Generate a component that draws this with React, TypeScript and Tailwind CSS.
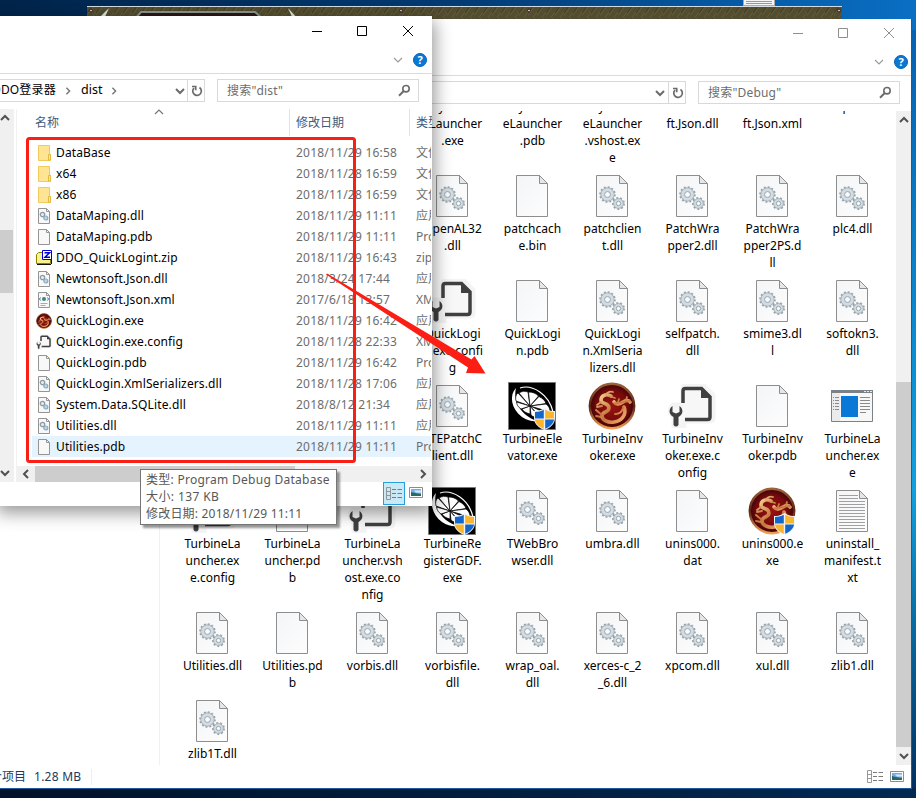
import type { ReactNode } from 'react';

type Kind = 'dll' | 'blank' | 'config' | 'citrus' | 'dragon' | 'dragonShield' | 'app' | 'text' | 'none';
type Entry = { icon: Kind; lines: string[] };

const e = (icon: Kind, ...lines: string[]): Entry => ({ icon, lines });

const gap = e('none');

const rows: Entry[][] = [
  [gap, gap, gap, e('dll', 'OpenAL32', '.dll'), e('blank', 'patchcach', 'e.bin'), e('dll', 'patchclien', 't.dll'), e('dll', 'PatchWra', 'pper2.dll'), e('dll', 'PatchWra', 'pper2PS.d', 'll'), e('dll', 'plc4.dll')],
  [gap, gap, gap, e('config', 'QuickLogi', 'n.exe.confi', 'g'), e('blank', 'QuickLogi', 'n.pdb'), e('dll', 'QuickLogi', 'n.XmlSeria', 'lizers.dll'), e('dll', 'selfpatch.', 'dll'), e('dll', 'smime3.dl', 'l'), e('dll', 'softokn3.', 'dll')],
  [gap, gap, gap, e('dll', 'TTEPatchC', 'lient.dll'), e('citrus', 'TurbineEle', 'vator.exe'), e('dragon', 'TurbineInv', 'oker.exe'), e('config', 'TurbineInv', 'oker.exe.c', 'onfig'), e('blank', 'TurbineInv', 'oker.pdb'), e('app', 'TurbineLa', 'uncher.ex', 'e')],
  [e('config', 'TurbineLa', 'uncher.ex', 'e.config'), e('blank', 'TurbineLa', 'uncher.pd', 'b'), e('config', 'TurbineLa', 'uncher.vsh', 'ost.exe.co', 'nfig'), e('citrus', 'TurbineRe', 'gisterGDF.', 'exe'), e('dll', 'TWebBro', 'wser.dll'), e('dll', 'umbra.dll'), e('blank', 'unins000.', 'dat'), e('dragonShield', 'unins000.e', 'xe'), e('text', 'uninstall_', 'manifest.t', 'xt')],
  [e('dll', 'Utilities.dll'), e('blank', 'Utilities.pd', 'b'), e('dll', 'vorbis.dll'), e('dll', 'vorbisfile.', 'dll'), e('dll', 'wrap_oal.', 'dll'), e('dll', 'xerces-c_2', '_6.dll'), e('dll', 'xpcom.dll'), e('dll', 'xul.dll'), e('dll', 'zlib1.dll')],
  [e('dll', 'zlib1T.dll')],
];

const firstRow: string[][] = [[], [], [], ['y       ', 'eLauncher', '.exe'], ['y       ', 'eLauncher', '.pdb'], ['y       ', 'eLauncher', '.vshost.ex', 'e'], ['', 'ft.Json.dll'], ['', 'ft.Json.xml'], ['p    ']];

type FileRow = [string, string, string, string];
const files: FileRow[] = [
  ['folder', 'DataBase', '2018/11/29 16:58', '文件'],
  ['folder', 'x64', '2018/11/28 16:59', '文件'],
  ['folder', 'x86', '2018/11/28 16:59', '文件'],
  ['dll', 'DataMaping.dll', '2018/11/29 11:11', '应用'],
  ['blank', 'DataMaping.pdb', '2018/11/29 11:11', 'Pro'],
  ['zip', 'DDO_QuickLogint.zip', '2018/11/29 16:43', 'zip'],
  ['dll', 'Newtonsoft.Json.dll', '2018/3/24 17:44', '应用'],
  ['xml', 'Newtonsoft.Json.xml', '2017/6/18 13:57', 'XM'],
  ['exe', 'QuickLogin.exe', '2018/11/29 16:42', '应用'],
  ['config', 'QuickLogin.exe.config', '2018/11/28 22:33', 'XM'],
  ['blank', 'QuickLogin.pdb', '2018/11/29 16:42', 'Pro'],
  ['dll', 'QuickLogin.XmlSerializers.dll', '2018/11/28 17:06', '应用'],
  ['dll', 'System.Data.SQLite.dll', '2018/8/12 21:34', '应用'],
  ['dll', 'Utilities.dll', '2018/11/29 11:11', '应用'],
  ['blank', 'Utilities.pdb', '2018/11/29 11:11', 'Pro'],
];

function Gear({ cx, cy, r, teeth }: { cx: number; cy: number; r: number; teeth: number }) {
  const dash = (2 * Math.PI * r) / (teeth * 2);
  return (
    <g>
      <circle cx={cx} cy={cy} r={r} fill="none" stroke="#98a3ab" strokeWidth="2.6" strokeDasharray={dash} />
      <circle cx={cx} cy={cy} r={r - 0.3} fill="#d3dce2" stroke="#9eabb4" strokeWidth="0.9" />
      <circle cx={cx} cy={cy} r={r * 0.42} fill="#f8f9fa" stroke="#98a5ae" strokeWidth="1" />
    </g>
  );
}

function Page({ children }: { children?: ReactNode }) {
  return (
    <svg width="32" height="42" viewBox="0 0 32 42">
      <defs>
        <linearGradient id="paper" x1="0" y1="0" x2="1" y2="1">
          <stop offset="0" stopColor="#f4f5f6" />
          <stop offset="1" stopColor="#fdfdfe" />
        </linearGradient>
      </defs>
      <path d="M.5.5h23l8 8v33H.5z" fill="url(#paper)" stroke="#8e8e8e" />
      <path d="M23.5.5v8h8z" fill="#e6e6e6" stroke="#8e8e8e" />
      {children}
    </svg>
  );
}

function Shield() {
  return (
    <g transform="translate(26 26)">
      <path d="M10.500 0C7 2.500 3.500 3 0 3v7c0 6 5 10 10.500 12C16 20 21 16 21 10V3c-3.500 0-7-.5-10.500-3z" fill="#eef4fa" />
      <path d="M9.800 1.800C7 3.300 4 4 1 4v6.500h8.800zM11.200 11.500v9.200c5-2 8.500-5.500 8.800-9.200z" fill="#1467c8" />
      <path d="M11.200 1.800C14 3.300 17 4 20 4v6.500h-8.800zM9.800 11.500v9.200C4.800 18.700 1.300 15.200 1 11.500z" fill="#fbb52d" />
    </g>
  );
}

function Citrus() {
  return (
    <svg width="48" height="48" viewBox="0 0 48 48">
      <path d="M.5.5h47v47H.5z" fill="#000" stroke="#777" />
      <path d="M8 6C1 13 3 27 14 35c6 4 12 5 16 4C17 36 4 22 8 6z" fill="#fff" />
      <g fill="#fff" stroke="#000" strokeWidth="0.700" strokeLinejoin="round">
        <path d="M22 24L8 19C7 16 8 12 10 11z" />
        <path d="M22 24L11 11c3-2 6-2 9-1z" />
        <path d="M22 24L20.500 10c4 0 7 1 10 4z" />
        <path d="M22 24l9-9.500c4 2 6 4 7 7z" />
        <path d="M22 24l16-2c3 2 4 5 4 8z" />
        <path d="M22 24l18 8c-1 3-4 4-7 4z" />
        <path d="M22 24l10 12c-4 0-7-1-9-3z" />
        <path d="M22 24v8c-4-1-7-3-8-5z" />
        <path d="M22 24l-9 3c-3-2-4-4-4.500-7z" />
      </g>
      <path d="M12 6C24 2 41 12 45 30" fill="none" stroke="#fff" strokeWidth="1.200" />
      <Shield />
    </svg>
  );
}

function Dragon({ shield, size = 48 }: { shield?: boolean; size?: number }) {
  return (
    <svg width={size} height={size} viewBox="0 0 48 48" className="shrink-0">
      <defs>
        <linearGradient id="ring" x1="0" y1="0" x2="0" y2="1">
          <stop offset="0" stopColor="#9d6238" />
          <stop offset="0.5" stopColor="#5b2416" />
          <stop offset="1" stopColor="#f0a055" />
        </linearGradient>
        <radialGradient id="core">
          <stop offset="0" stopColor="#9a1210" />
          <stop offset="0.700" stopColor="#750a0c" />
          <stop offset="1" stopColor="#3d0406" />
        </radialGradient>
        <linearGradient id="gold" x1="0" y1="0" x2="1" y2="1">
          <stop offset="0" stopColor="#f0c98a" />
          <stop offset="0.500" stopColor="#c4743c" />
          <stop offset="1" stopColor="#f2b070" />
        </linearGradient>
      </defs>
      <circle cx="24" cy="24" r="22.200" fill="url(#core)" stroke="url(#ring)" strokeWidth="2.400" />
      <g fill="none" stroke="url(#gold)" strokeLinecap="round" strokeLinejoin="round">
        <path d="M23 14c-5-3-10 0-10 4 0 5 8 2 8 8 0 5-7 3-7 8 0 4 6 7 12 6 8-1 13-8 10-15" strokeWidth="3.600" />
        <path d="M26 20c2 3 6 2 9 0 3-2 6-2 7 0" strokeWidth="3.600" />
        <path d="M35 26c-1 4-4 6-8 6" strokeWidth="2" />
        <path d="M18 13c1-3 4-4 7-3M21 14l6 2M13 20l-4 3M14 24l-5 1M14 33l-6-5M13 35l-5-1M38 18l1-3M30 20l1-3" strokeWidth="1.800" />
      </g>
      {shield && <Shield />}
    </svg>
  );
}

function Config({ small }: { small?: boolean }) {
  return (
    <svg width={small ? 16 : 48} height={small ? 16 : 44} viewBox="0 0 48 44" className="shrink-0">
      <path d="M15 8V5c0-2 1-3 3-3h18l9 9v23c0 2-1 3-3 3H16v6H6V33L1 27l4-6h10z" fill="#f7f7f7" stroke="#f4f4f4" strokeWidth="5" strokeLinejoin="round" />
      <path d="M15 19V7q0-2.500 2.500-2.500h16L42 13v20q0 2.500-2.500 2.500H17" fill="#f7f7f7" stroke="#404040" strokeWidth={small ? 4.5 : 3.5} />
      <path d="M33 4.500V14h10z" fill="#404040" />
      <path d="M4.500 22C0 25 1 31 5.500 33v8q2.500 3 5 0v-8C15 31 16 25 11.500 22v6l-3.500 1.500L4.500 28z" fill="#404040" />
    </svg>
  );
}

function BigIcon({ kind }: { kind: Kind }) {
  switch (kind) {
    case 'none':
      return null;
    case 'dll':
      return (
        <Page>
          <Gear cx={11.5} cy={19.5} r={7} teeth={12} />
          <Gear cx={22.5} cy={28.5} r={5.2} teeth={9} />
        </Page>
      );
    case 'text':
      return (
        <Page>
          <path d="M3 5.500h19M3 8.500h19M3 11.500h26M3 14.500h26M3 17.500h26M3 20.500h26M3 23.500h26M3 26.500h26M3 29.500h26M3 32.500h26M3 35.500h26M3 38.500h26" stroke="#a0a0a0" />
        </Page>
      );
    case 'citrus':
      return <Citrus />;
    case 'dragon':
      return <Dragon />;
    case 'dragonShield':
      return <Dragon shield />;
    case 'config':
      return <Config />;
    case 'app':
      return (
        <svg width="42" height="32" viewBox="0 0 42 32">
          <path d="M.5.5h41v31H.5z" fill="#f7f7f7" stroke="#7b8186" />
          <path d="M0 0h42v3H0z" fill="#7b8186" />
          <path d="M1 3h8v28H1z" fill="#ebebeb" />
          <path d="M33 1.500h2m1 0h2m1 0h2" stroke="#e9e9e9" />
          <path d="M10 6h17v21H10z" fill="#0a78d7" />
          <path d="M29 7.500h10M29 10.500h10M29 13.500h10M29 16.500h10M29 19.500h10M29 22.500h6M2 7.500h1m1 0h4M2 10.500h1m1 0h4M2 13.500h1m1 0h4M2 16.500h1m1 0h4M2 19.500h1m1 0h4" stroke="#8a8a8a" />
        </svg>
      );
    default:
      return <Page />;
  }
}

function SmallIcon({ kind }: { kind: string }) {
  if (kind === 'exe') return <Dragon size={16} />;
  if (kind === 'config') return <Config small />;
  if (kind === 'folder')
    return (
      <svg width="16" height="16" viewBox="0 0 16 16" className="shrink-0">
        <path d="M2.500.5h11v9h1v6h-12z" fill="#ffe494" stroke="#f0ca5d" />
        <path d="M12.500 15V9.500h2V15z" fill="#ffe9a6" stroke="#e3b93f" />
      </svg>
    );
  if (kind === 'zip')
    return (
      <svg width="16" height="16" viewBox="0 0 16 16" className="shrink-0">
        <path d="M.5 4.500l2-2h4v2h8v9h-14z" fill="#f8f18e" stroke="#8b8300" />
        <path d="M1 14.500h14M15.500 9v5" stroke="#111" />
        <path d="M6.500.5h9v9h-9z" fill="#fff" stroke="#0000d4" />
        <path d="M8.500 2.700h5L9 7.300h5" fill="none" stroke="#0000d4" strokeWidth="1.500" />
      </svg>
    );
  return (
    <svg width="16" height="16" viewBox="0 0 16 16" className="shrink-0">
      <path d="M2.500.5h8l3 3v12h-11z" fill="#f8f8f8" stroke="#949494" />
      <path d="M10.500.5v3h3" fill="none" stroke="#949494" />
      {kind === 'dll' && (
        <g>
          <circle cx="6.500" cy="6.500" r="2.200" fill="#e6ebee" stroke="#8f9ba3" strokeWidth="1.300" />
          <circle cx="9.800" cy="10" r="2" fill="#b8d4e6" stroke="#8eabc0" strokeWidth="1.200" />
        </g>
      )}
      {kind === 'xml' && (
        <g>
          <path d="M4.500 5.500L3.500 7l1 1.500M11.500 5.500l1 1.500-1 1.500" fill="none" stroke="#3975ad" />
          <circle cx="8" cy="7" r="2" fill="#3a8a7a" />
          <path d="M4.500 11.500h7M4.500 13.500h5" stroke="#aaa" />
        </g>
      )}
    </svg>
  );
}

type Dir = 'up' | 'down' | 'left' | 'right';
const chevrons: Record<Dir, string> = { up: 'M1 7l4-4 4 4', down: 'M1 3l4 4 4-4', left: 'M7 1L3 5l4 4', right: 'M3 1l4 4-4 4' };

function Chevron({ dir, color = '#505050', weight = 2, size = 10 }: { dir: Dir; color?: string; weight?: number; size?: number }) {
  return (
    <svg width={size} height={size} viewBox="0 0 10 10" className="shrink-0">
      <path d={chevrons[dir]} fill="none" stroke={color} strokeWidth={weight} />
    </svg>
  );
}

function WindowButtons({ color }: { color: string }) {
  return (
    <svg width="104" height="12" viewBox="0 0 104 12" fill="none" stroke={color}>
      <path d="M1 6.500h10M46.500 1.500h9v9h-9zM92 1l10 10M102 1l-10 10" />
    </svg>
  );
}

function Help() {
  return (
    <span className="flex size-[14px] items-center justify-center rounded-full border border-[#0a62b5] bg-[#0878d4] text-[11px] leading-none font-bold text-white">?</span>
  );
}

function Refresh() {
  return (
    <svg width="12" height="12" viewBox="0 0 12 12" fill="none" stroke="#6b6b6b" strokeWidth="1.700">
      <path d="M8.500 2.500A4.300 4.300 0 1 1 3 3" />
      <path d="M1 1.500h3.700v3.800" />
    </svg>
  );
}

function Magnifier() {
  return (
    <svg width="13" height="13" viewBox="0 0 13 13" fill="none" stroke="#6b6b6b">
      <circle cx="8" cy="4.700" r="3.200" strokeWidth="1.600" />
      <path d="M5.500 7.200L1 11.700" strokeWidth="2" />
    </svg>
  );
}

function ListViewIcon() {
  return (
    <svg width="16" height="13" viewBox="0 0 16 13" fill="none" stroke="#8d8d8d">
      <path d="M.5.5h4v12h-4zM.5 4.500h4M.5 8.500h4" strokeWidth="0.900" />
      <path d="M6 2.500h4m1.500 0H16M6 6.500h4m1.500 0H16M6 10.500h4m1.500 0H16" stroke="#7a7a7a" />
    </svg>
  );
}

function PictureIcon() {
  return (
    <svg width="14" height="11" viewBox="0 0 14 11">
      <path d="M.5.5h13v10H.5z" fill="#fff" stroke="#8d8d8d" />
      <path d="M2 2h10v7H2z" fill="#76aee8" />
      <path d="M5 3.500h7v2H7z" fill="#d9ebfb" />
      <path d="M2 5l4 1 6 1v2H2z" fill="#2c6863" />
    </svg>
  );
}

function SearchBox({ text }: { text: string }) {
  return (
    <div className="flex h-[23px] w-[202px] items-center justify-between border border-[#d9d9d9] bg-white pr-[7px] pb-px pl-[9px] text-[#6d6d6d]">
      <span className="tracking-[0.200px]">{text}</span>
      <Magnifier />
    </div>
  );
}

function BackWindow() {
  return (
    <div className="absolute top-[19px] left-0 flex h-[770px] w-[912px] flex-col border-r border-b border-[#1b5d9c] bg-white">
      <div className="flex h-[29px] shrink-0 items-center justify-end pr-[15px] pb-[2px]">
        <WindowButtons color="#8f8f8f" />
      </div>
      <div className="flex h-[28px] shrink-0 items-center justify-end gap-[10px] border-b border-[#dadbdc] pr-[3px]">
        <Chevron dir="down" color="#9b9b9b" weight={1.2} />
        <Help />
      </div>
      <div className="flex h-[35px] shrink-0 items-center justify-end gap-3 pr-[11px] pb-[2px]">
        <div className="flex h-[23px] w-[686px] items-stretch justify-end border border-[#d9d9d9]">
          <div className="flex w-4 items-center justify-center">
            <Chevron dir="down" color="#6b6b6b" />
          </div>
          <div className="flex w-[17px] items-center justify-center border-l border-[#d9d9d9] pl-px">
            <Refresh />
          </div>
        </div>
        <SearchBox text={'搜索"Debug"'} />
      </div>
      <div className="flex h-[654px] shrink-0">
        <div className="w-[160px] shrink-0 border-r border-[#f0f0f0]" />
        <div className="flex-1 overflow-hidden pl-[12px]">
          <div className="-mt-[13px] grid h-[76px] w-[720px] grid-cols-9">
            {firstRow.map((lines, i) => (
              <div key={i} className="pl-px text-center leading-[17px]">
                {lines.map((l, j) => (
                  <div key={j} className="h-[17px] whitespace-pre">{l}</div>
                ))}
              </div>
            ))}
          </div>
          {rows.map((row, r) => (
            <div key={r} className="grid w-[720px] grid-cols-9">
              {row.map((item, i) => (
                <div key={i} className="pb-[8px]">
                  <div className="flex h-[46px] items-center justify-center pb-[2px]">
                    <BigIcon kind={item.icon} />
                  </div>
                  <div className="pl-px text-center leading-[17px]">
                    {item.lines.map((l, j) => (
                      <div key={j} className="whitespace-pre">{l}</div>
                    ))}
                  </div>
                </div>
              ))}
            </div>
          ))}
        </div>
        <div className="flex w-[15px] flex-col bg-[#f0f0f0]">
          <div className="flex h-[18px] items-center justify-center">
            <Chevron dir="up" />
          </div>
          <div className="mt-[253px] h-[365px] bg-[#cdcdcd]" />
          <div className="flex flex-1 items-center justify-center">
            <Chevron dir="down" />
          </div>
        </div>
      </div>
      <div className="flex flex-1 items-center text-[#1e395b]">
        <span className="-ml-[10px] whitespace-pre">个项目</span>
        <span className="ml-[8px] h-4 border-r border-[#eee] pr-[10px] leading-4 tracking-[0.250px]">1.28 MB</span>
        <div className="flex flex-1 items-center justify-end gap-[7px] pr-[7px] pb-px">
          <ListViewIcon />
          <PictureIcon />
        </div>
      </div>
    </div>
  );
}

function FrontWindow() {
  return (
    <div className="absolute top-[16px] left-0 flex h-[490px] w-[432px] flex-col overflow-hidden bg-white">
      <div className="flex h-[30px] shrink-0 items-center justify-end pr-[17px]">
        <WindowButtons color="#000" />
      </div>
      <div className="flex h-[28px] shrink-0 items-center justify-end gap-[10px] border-b border-[#dadbdc] pr-[5px]">
        <Chevron dir="down" color="#9b9b9b" weight={1.2} />
        <Help />
      </div>
      <div className="flex h-[35px] shrink-0 items-center gap-3 pb-[2px]">
        <div className="flex h-[23px] w-[205px] items-stretch border border-l-0 border-[#d9d9d9]">
          <div className="flex flex-1 items-center overflow-hidden pb-[2px] whitespace-pre">
            <span className="-ml-[8px] w-[65px] tracking-[0.150px]">DDO登录器</span>
            <span className="mt-[2px] ml-[7px]">
              <Chevron dir="right" color="#777" size={8} weight={1.8} />
            </span>
            <span className="ml-[9px] w-[21px] text-[12.500px]">dist</span>
            <span className="mt-[2px] ml-[8px]">
              <Chevron dir="right" color="#777" size={8} weight={1.8} />
            </span>
          </div>
          <div className="flex w-4 items-center justify-center pl-px">
            <Chevron dir="down" color="#6b6b6b" />
          </div>
          <div className="flex w-[17px] items-center justify-center border-l border-[#d9d9d9] pl-px">
            <Refresh />
          </div>
        </div>
        <SearchBox text={'搜索"dist"'} />
      </div>
      <div className="flex h-[373px] shrink-0">
        <div className="flex w-[14px] shrink-0 flex-col bg-[#f0f0f0]">
          <div className="flex h-[18px] items-center">
            <Chevron dir="up" />
          </div>
          <div className="mt-[103px] h-[63px] w-[13px] bg-[#cdcdcd]" />
          <div className="flex flex-1 items-end pb-[4px]">
            <Chevron dir="down" />
          </div>
        </div>
        <div className="ml-[2px] flex flex-1 flex-col overflow-hidden border-l border-[#f2f2f2]">
          <div className="flex h-[27px] shrink-0 items-center text-[#44597a]">
            <div className="flex h-full w-[273px] shrink-0 items-center justify-between border-r border-[#e2e2e2] pl-[18px]">
              <span>名称</span>
              <span className="mr-[125px] -mt-[2px] self-start">
                <Chevron dir="up" size={10} weight={1.2} color="#777" />
              </span>
            </div>
            <div className="flex h-full w-[120px] shrink-0 items-center border-r border-[#e2e2e2] pl-[6px]">修改日期</div>
            <div className="w-[22px] shrink-0 overflow-hidden pl-[6px] whitespace-nowrap">类型</div>
          </div>
          <div className="mt-[6px] h-[324px] shrink-0 overflow-hidden pr-px">
            {files.map(([icon, name, date, type], i) => (
              <div key={i} className={'ml-[15px] flex h-[21px] items-center overflow-hidden pl-[4px] ' + (i === 14 ? 'bg-[#e5f3ff]' : '')}>
                <SmallIcon kind={icon} />
                <span className="ml-[4px] w-[240px] shrink-0 tracking-[0.130px] whitespace-pre">{name}</span>
                <span className="w-[120px] shrink-0 tracking-[0.220px] whitespace-pre text-[#6d6d6d]">{date}</span>
                <span className="whitespace-nowrap text-[#6d6d6d]">{type}</span>
              </div>
            ))}
          </div>
          <div className="flex h-4 shrink-0 items-center bg-[#f0f0f0]">
            <div className="flex h-full w-[18px] items-center justify-center">
              <Chevron dir="left" />
            </div>
            <div className="h-full w-[260px] bg-[#cdcdcd]" />
            <div className="flex flex-1 justify-end pr-[4px]">
              <Chevron dir="right" />
            </div>
          </div>
        </div>
      </div>
      <div className="flex flex-1 items-start justify-end gap-[4px] pr-[9px]">
        <div className="flex h-[23px] w-[22px] items-center justify-center border border-[#26a0da] bg-[#cbe8f6]">
          <ListViewIcon />
        </div>
        <div className="flex h-[21px] items-center">
          <PictureIcon />
        </div>
      </div>
    </div>
  );
}

function Wallpaper() {
  return (
    <div className="absolute inset-0 bg-linear-to-r from-[#00244a] via-[#033b74] via-50% to-[#0a6fc4]">
      <div className="mt-[6px] ml-[87px] h-[13px] w-[755px]">
        <svg width="755" height="13" viewBox="0 0 755 13">
          <defs>
            <pattern id="grain" width="9" height="12" patternUnits="userSpaceOnUse">
              <path d="M0 0h9v12H0z" fill="#524d2f" />
              <path d="M-2 12L7 0M3 14L12 2" stroke="#655b3a" />
              <path d="M0 7L5 0" stroke="#3f3d29" />
            </pattern>
          </defs>
          <path d="M0 0h755v13H0z" fill="url(#grain)" />
          <path d="M0 .5h755" stroke="#d4dbe0" />
          <path d="M48 13l6-7h114l8 7z" fill="#2c1815" stroke="#87948d" strokeWidth="2" />
          <path d="M14 10l8-8-5 11zM201 2l10 11h-5z" fill="#dce4df" />
          <circle cx="4" cy="4.500" r="1.500" fill="#cbb6ad" stroke="#3a1820" />
          <circle cx="314" cy="4.500" r="1.500" fill="#cbb6ad" stroke="#3a1820" />
          <circle cx="442" cy="4.500" r="1.500" fill="#cbb6ad" stroke="#3a1820" />
          <circle cx="752" cy="4.500" r="1.500" fill="#cbb6ad" stroke="#3a1820" />
        </svg>
      </div>
      <div className="absolute top-0 left-[743px] h-[6px] w-[32px] border border-t-0 border-[#aaa] bg-[#f4f4f4] px-[2px] pt-px">
        <div className="h-[3px] border-y border-[#999]" />
      </div>
      <div className="absolute top-[30px] right-0 h-[768px] w-[5px] bg-linear-to-b from-[#0861b2] via-[#11a0e0] via-60% to-[#032d5c]" />
      <div className="absolute inset-x-0 bottom-0 h-[10px] bg-linear-to-r from-[#001329] to-[#032951]" />
    </div>
  );
}

export default function App() {
  return (
    <div className="relative h-[798px] w-[916px] overflow-hidden font-['Noto_Sans','Noto_Sans_CJK_SC',sans-serif] text-[12px] leading-[17px] text-black">
      <Wallpaper />
      <BackWindow />
      <div className="absolute top-[20px] left-0 h-[486px] w-[432px] shadow-[0_4px_16px_3px_rgba(0,0,0,0.4)]" />
      <FrontWindow />
      <div className="absolute top-[469px] left-[140px] h-[56px] w-[197px] border border-[#767676] bg-white pt-px pl-[5px] whitespace-nowrap text-[#575757] shadow-[3px_3px_2px_rgba(0,0,0,0.4)]">
        <div className="tracking-[0.270px]">类型: Program Debug Database</div>
        <div className="tracking-[0.400px]">大小: 137 KB</div>
        <div className="tracking-[0.200px]">修改日期: 2018/11/29 11:11</div>
      </div>
      <svg width="916" height="798" viewBox="0 0 916 798" className="absolute inset-0">
        <rect x="27.500" y="138.500" width="327" height="323" rx="2" fill="none" stroke="#fb1e14" strokeWidth="3" />
        <path d="M327 273.500L471.500 359.500l3-3.500L485.500 373.500 466 373 468 367.500 326 274.500z" fill="#fb1e14" />
      </svg>
    </div>
  );
}
